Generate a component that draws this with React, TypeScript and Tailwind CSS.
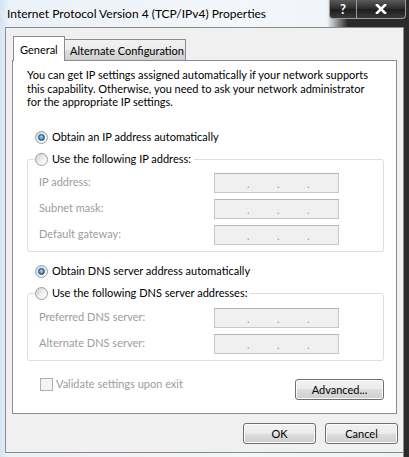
import React from "react";

type RadioProps = { checked?: boolean };

const Radio: React.FC<RadioProps> = ({ checked }) => (
  <span className="flex h-[13px] w-[13px] shrink-0 items-center justify-center rounded-full border border-[#9a9c9e] bg-[linear-gradient(135deg,#cfd1d3,#f7f7f7_70%,#ffffff)]">
    {checked && (
      <span className="h-[7px] w-[7px] rounded-full border border-[#1d4f78] bg-[radial-gradient(circle_at_45%_40%,#b7e1fb,#3b86c2_60%,#1f5c8f)]" />
    )}
  </span>
);

const IpField = () => (
  <div className="flex h-[20px] w-[125px] items-center gap-[27px] border border-[#c6c6c6] border-t-[#b5b5b5] bg-[#f0f0f0] pl-[32px] pt-[3px] text-[#9a9a9a]">
    <span className="w-[3px]">.</span>
    <span className="w-[3px]">.</span>
    <span className="w-[3px]">.</span>
  </div>
);

const FieldRow = ({ label }: { label: string }) => (
  <div className="flex h-[20px] items-center pl-[4px]">
    <span className="w-[175px] whitespace-nowrap text-[#9c9c9c]">{label}</span>
    <IpField />
  </div>
);

const WinButton = ({ label, width }: { label: string; width: string }) => (
  <button
    className={`${width} h-[21px] rounded-[3px] border border-[#707070] bg-[linear-gradient(#f2f2f2,#ebebeb_50%,#dddddd_50%,#cfcfcf)] text-[11px] leading-[19px] text-black shadow-[inset_0_0_0_1px_#fbfbfb]`}
  >
    {label}
  </button>
);

export default function App() {
  return (
    <div className="flex h-[457px] w-[409px] flex-col overflow-hidden bg-[linear-gradient(90deg,#d5e4f2_0%,#eaf1f8_2%,#f3f6fa_60%,#eef2f6_98.5%,#2b2b2b_98.8%)] font-['Segoe_UI','Lato',sans-serif] text-[11px] text-black">
      {/* title bar */}
      <div className="flex h-[27px] shrink-0 items-start justify-between bg-[linear-gradient(90deg,rgba(255,255,255,0)_80%,#2a2a2a_85%)]">
        <div className="whitespace-nowrap pl-[7px] pt-[6px] text-[12px] leading-[16px] text-black [text-shadow:0_0_6px_#ffffff]">
          Internet Protocol Version 4 (TCP/IPv4) Properties
        </div>
        <div className="mr-[3px] flex h-[19px]">
          <div className="flex w-[28px] items-center justify-center rounded-bl-[4px] border border-t-0 border-[#9a9a9a] bg-[linear-gradient(#5a5a5a,#2b2b2b_50%,#1c1c1c_50%,#3a3a3a)] text-[13px] font-bold leading-none text-white">
            ?
          </div>
          <div className="flex w-[49px] items-center justify-center rounded-br-[4px] border border-l-0 border-t-0 border-[#9a9a9a] bg-[linear-gradient(#5a5a5a,#2b2b2b_50%,#1c1c1c_50%,#3a3a3a)]">
            <svg width="12" height="10" viewBox="0 0 12 10">
              <path d="M2 1 L10 9 M10 1 L2 9" stroke="#ffffff" strokeWidth="2.6" strokeLinecap="square" />
            </svg>
          </div>
        </div>
      </div>

      {/* client area */}
      <div className="ml-[5px] flex h-[426px] w-[399px] flex-col border border-[#8a8a8a] bg-[#f0f0f0]">
        {/* tabs */}
        <div className="relative z-10 ml-[7px] mt-[8px] flex h-[24px] items-end">
          <div className="-mb-px flex h-[25px] w-[52px] items-start whitespace-nowrap border border-b-0 border-[#898c95] bg-white pl-[6px] pt-[5px]">
            General
          </div>
          <div className="flex h-[21px] w-[121px] items-start whitespace-nowrap border border-b-0 border-l-0 border-[#898c95] bg-[linear-gradient(#f2f2f2,#ebebeb_50%,#dddddd_50%,#cfcfcf)] pl-[5px] pt-[3px]">
            Alternate Configuration
          </div>
        </div>

        {/* panel */}
        <div className="ml-[6px] flex h-[354px] w-[385px] flex-col border border-[#898c95] bg-white">
          <p className="ml-[14px] mt-[7px] whitespace-nowrap leading-[13.5px]">
            You can get IP settings assigned automatically if your network supports
            <br />
            this capability. Otherwise, you need to ask your network administrator
            <br />
            for the appropriate IP settings.
          </p>

          <div className="ml-[22px] mt-[21px] flex h-[16px] items-center gap-[4px]">
            <Radio checked />
            <span>Obtain an IP address automatically</span>
          </div>

          <fieldset className="ml-[14px] mt-[6px] w-[357px] rounded-[3px] border border-[#d5dfe5] px-[7px] pb-[6px]">
            <legend className="flex h-[16px] items-center gap-[4px] pr-[3px]">
              <Radio />
              <span>Use the following IP address:</span>
            </legend>
            <div className="flex flex-col gap-[6px] pt-[5px]">
              <FieldRow label="IP address:" />
              <FieldRow label="Subnet mask:" />
              <FieldRow label="Default gateway:" />
            </div>
          </fieldset>

          <div className="ml-[22px] mt-[12px] flex h-[16px] items-center gap-[4px]">
            <Radio checked />
            <span>Obtain DNS server address automatically</span>
          </div>

          <fieldset className="ml-[14px] mt-[6px] w-[357px] rounded-[3px] border border-[#d5dfe5] px-[7px] pb-[6px]">
            <legend className="flex h-[16px] items-center gap-[4px] pr-[3px]">
              <Radio />
              <span>Use the following DNS server addresses:</span>
            </legend>
            <div className="flex flex-col gap-[6px] pt-[6px]">
              <FieldRow label="Preferred DNS server:" />
              <FieldRow label="Alternate DNS server:" />
            </div>
          </fieldset>

          <div className="mt-[17px] flex items-start justify-between pl-[27px] pr-[12px]">
            <div className="flex h-[13px] items-center gap-[3px]">
              <span className="h-[13px] w-[13px] border border-[#b1b1b1] bg-[#f4f4f4]" />
              <span className="text-[#9c9c9c]">Validate settings upon exit</span>
            </div>
            <div className="mt-px">
              <WinButton label="Advanced..." width="w-[89px]" />
            </div>
          </div>
        </div>

        {/* dialog buttons */}
        <div className="mr-[5px] mt-[9px] flex justify-end gap-[9px]">
          <WinButton label="OK" width="w-[73px]" />
          <WinButton label="Cancel" width="w-[73px]" />
        </div>
      </div>
    </div>
  );
}
